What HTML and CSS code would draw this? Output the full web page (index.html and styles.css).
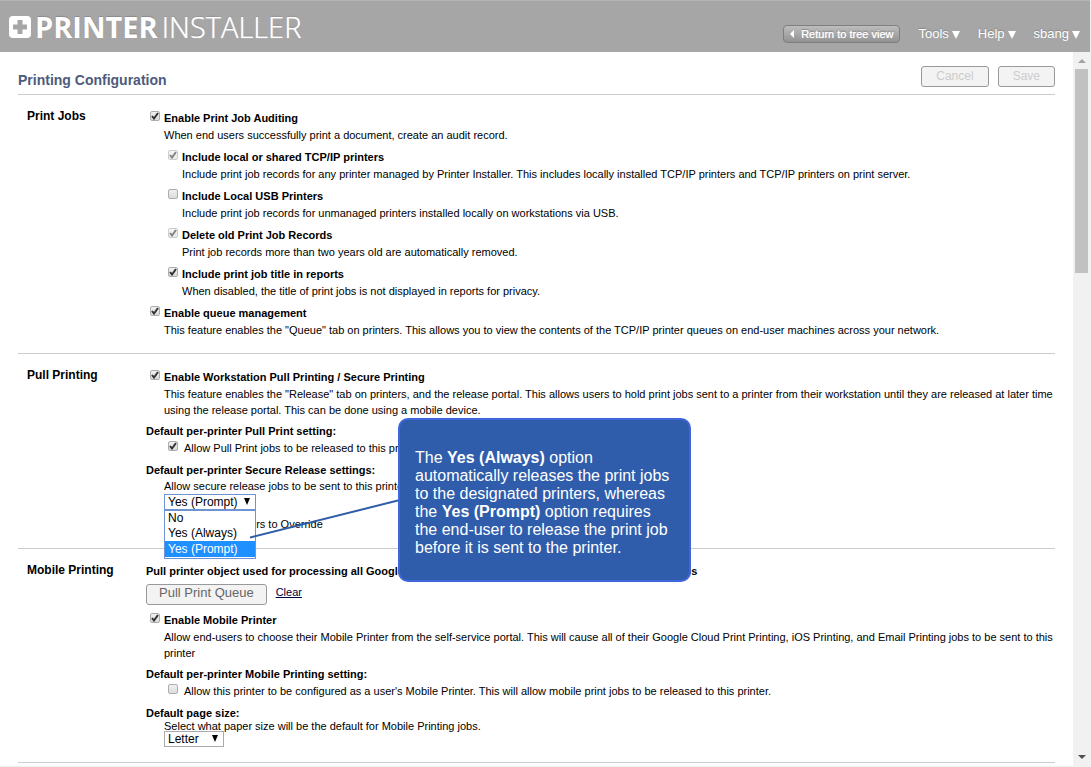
FILE: index.html
```html
<!DOCTYPE html>
<html lang="en">
<head>
<meta charset="utf-8">
<title>Printer Installer - Printing Configuration</title>
<link rel="stylesheet" href="styles.css">
</head>
<body>
<header class="topbar">
  <div class="logo">
    <svg class="logo-mark" viewBox="0 0 22 22" aria-hidden="true"><path fill="#fff" fill-rule="evenodd" d="M4 0h14a4 4 0 0 1 4 4v14a4 4 0 0 1-4 4H4a4 4 0 0 1-4-4V4a4 4 0 0 1 4-4zM8.500 4v4.500H4v5h4.500V18h5v-4.500H18v-5h-4.500V4z"/></svg>
    <span class="logo-bold">PRINTER</span><span class="logo-light">INSTALLER</span>
  </div>
  <nav class="topnav">
    <button class="tree-button" type="button"><svg class="back-arrow" viewBox="0 0 4 8" aria-hidden="true"><path fill="#fff" d="M4 0v8L0 4z"/></svg>Return to tree view</button>
    <button class="menu" type="button">Tools<svg class="menu-arrow" viewBox="0 0 8 10" aria-hidden="true"><path fill="#fff" d="M0 2h8L4 10z"/></svg></button>
    <button class="menu" type="button">Help<svg class="menu-arrow" viewBox="0 0 8 10" aria-hidden="true"><path fill="#fff" d="M0 2h8L4 10z"/></svg></button>
    <button class="menu" type="button">sbang<svg class="menu-arrow" viewBox="0 0 8 10" aria-hidden="true"><path fill="#fff" d="M0 2h8L4 10z"/></svg></button>
  </nav>
</header>
<div class="workspace">
  <main class="content">
    <div class="titlebar">
      <h1>Printing Configuration</h1>
      <div class="actions">
        <button class="btn" type="button" disabled>Cancel</button>
        <button class="btn" type="button" disabled>Save</button>
      </div>
    </div>

    <section class="section">
      <h2>Print Jobs</h2>
      <div class="fields">
        <div class="option">
          <input type="checkbox" id="audit" checked>
          <div><label for="audit">Enable Print Job Auditing</label><p>When end users successfully print a document, create an audit record.</p></div>
        </div>
        <div class="option sub">
          <input type="checkbox" id="shared" checked disabled>
          <div><label for="shared">Include local or shared TCP/IP printers</label><p>Include print job records for any printer managed by Printer Installer. This includes locally installed TCP/IP printers and TCP/IP printers on print server.</p></div>
        </div>
        <div class="option sub">
          <input type="checkbox" id="usb">
          <div><label for="usb">Include Local USB Printers</label><p>Include print job records for unmanaged printers installed locally on workstations via USB.</p></div>
        </div>
        <div class="option sub">
          <input type="checkbox" id="old" checked disabled>
          <div><label for="old">Delete old Print Job Records</label><p>Print job records more than two years old are automatically removed.</p></div>
        </div>
        <div class="option sub">
          <input type="checkbox" id="jobtitle" checked>
          <div><label for="jobtitle">Include print job title in reports</label><p>When disabled, the title of print jobs is not displayed in reports for privacy.</p></div>
        </div>
        <div class="option">
          <input type="checkbox" id="queue" checked>
          <div><label for="queue">Enable queue management</label><p>This feature enables the "Queue" tab on printers. This allows you to view the contents of the TCP/IP printer queues on end-user machines across your network.</p></div>
        </div>
      </div>
    </section>

    <section class="section">
      <h2>Pull Printing</h2>
      <div class="fields">
        <div class="option">
          <input type="checkbox" id="pull" checked>
          <div><label for="pull">Enable Workstation Pull Printing / Secure Printing</label><p>This feature enables the "Release" tab on printers, and the release portal. This allows users to hold print jobs sent to a printer from their workstation until they are released at later time using the release portal. This can be done using a mobile device.</p></div>
        </div>
        <div>
          <h3>Default per-printer Pull Print setting:</h3>
          <div class="option sub plain">
            <input type="checkbox" id="allowpull" checked>
            <label for="allowpull">Allow Pull Print jobs to be released to this printer.</label>
          </div>
        </div>
        <div>
          <h3>Default per-printer Secure Release settings:</h3>
          <div class="indent">
            <label class="hint" for="secure">Allow secure release jobs to be sent to this printer.</label>
            <div class="picker picker-open">
              <select id="secure"><option>No</option><option>Yes (Always)</option><option selected>Yes (Prompt)</option></select>
              <svg class="picker-arrow" viewBox="0 0 6 7" aria-hidden="true"><path d="M0 0h6L3 7z"/></svg>
              <ul class="choices">
                <li>No</li>
                <li>Yes (Always)</li>
                <li class="chosen">Yes (Prompt)</li>
              </ul>
              <svg class="pointer" viewBox="0 0 150 40" aria-hidden="true"><path d="M0 38.500L150 1" stroke="#2f5dab" stroke-width="2" fill="none"/></svg>
              <div class="callout">The <b>Yes (Always)</b> option automatically releases the print jobs to the designated printers, whereas the <b>Yes (Prompt)</b> option requires the end-user to release the print job before it is sent to the printer.</div>
            </div>
          </div>
        </div>
        <div class="option sub plain">
          <input type="checkbox" id="override">
          <label for="override">Allow End-Users to Override</label>
        </div>
      </div>
    </section>

    <section class="section">
      <h2>Mobile Printing</h2>
      <div class="fields">
        <div>
          <h3>Pull printer object used for processing all Google Cloud Print Printing, iOS Printing, &amp; Email Printing jobs</h3>
          <div class="queue-row">
            <button class="btn btn-dark" type="button">Pull Print Queue</button>
            <a href="#">Clear</a>
          </div>
        </div>
        <div class="option">
          <input type="checkbox" id="mobile" checked>
          <div><label for="mobile">Enable Mobile Printer</label><p>Allow end-users to choose their Mobile Printer from the self-service portal. This will cause all of their Google Cloud Print Printing, iOS Printing, and Email Printing jobs to be sent to this printer</p></div>
        </div>
        <div>
          <h3>Default per-printer Mobile Printing setting:</h3>
          <div class="option sub plain">
            <input type="checkbox" id="usermobile">
            <label for="usermobile">Allow this printer to be configured as a user's Mobile Printer. This will allow mobile print jobs to be released to this printer.</label>
          </div>
        </div>
        <div>
          <h3>Default page size:</h3>
          <div class="indent">
            <label class="hint hint-tight" for="paper">Select what paper size will be the default for Mobile Printing jobs.</label>
            <div class="picker picker-small">
              <select id="paper"><option>Letter</option><option>A4</option></select>
              <svg class="picker-arrow" viewBox="0 0 6 7" aria-hidden="true"><path d="M0 0h6L3 7z"/></svg>
            </div>
          </div>
        </div>
      </div>
    </section>
  </main>
  <div class="scrollbar" aria-hidden="true">
    <svg class="scroll-arrow" viewBox="0 0 8 4"><path fill="#a3a3a3" d="M0 4l4-4 4 4z"/></svg>
    <div class="track"><div class="thumb"></div></div>
    <svg class="scroll-arrow" viewBox="0 0 8 4"><path fill="#505050" d="M0 0l4 4 4-4z"/></svg>
  </div>
</div>
</body>
</html>
```
FILE: styles.css
```css
* { box-sizing: border-box; }
html, body { margin: 0; }
body {
  display: flex;
  flex-direction: column;
  min-height: 100vh;
  padding: 0 1px 1px 0;
  background: #f1f1f1;
  color: #000;
  font: 11px/16px "Liberation Sans", Arial, sans-serif;
}
h1, h2, h3, p, ul { margin: 0; padding: 0; }
button, select { font-family: inherit; }

.topbar {
  display: flex;
  justify-content: space-between;
  height: 52px;
  padding: 0 10px 0 9px;
  background: #a6a6a6;
  border-top: 1px solid #b4b4b4;
  color: #fff;
}
.logo {
  display: flex;
  align-items: center;
  font-family: "Open Sans", "Noto Sans", sans-serif;
  text-shadow: 0 -1px 1px #8a8a8a;
  white-space: nowrap;
}
.logo-mark { width: 22px; height: 22px; margin-right: 4px; }
.logo-bold { font-size: 29px; font-weight: 700; margin-right: 4px; }
.logo-light { font-size: 29px; font-weight: 300; text-shadow: 0 0 1px #fff, 0 -1px 1px #8a8a8a; }
.topnav { display: flex; align-items: center; gap: 18px; padding-top: 14px; }
.tree-button {
  display: flex;
  align-items: center;
  gap: 7px;
  height: 18px;
  padding: 0 6px;
  border: 1px solid #7f7f7f;
  border-radius: 4px;
  background: linear-gradient(#bdbdbd, #929292);
  color: #fff;
  font-size: 11px;
  font-weight: 400;
  text-shadow: 0 0 1px #fff, 0 -1px 1px #777;
}
.back-arrow { width: 4px; height: 8px; }
.menu {
  display: flex;
  align-items: center;
  gap: 3px;
  padding: 0;
  border: 0;
  background: none;
  color: #fff;
  font-size: 13px;
  text-shadow: 0 -1px 1px #888;
}
.menu-arrow { width: 8px; height: 10px; }

.workspace { display: flex; flex: 1; background: #fff; }
.content { flex: 1; min-width: 0; padding: 0 18px; }
.titlebar {
  display: flex;
  justify-content: space-between;
  align-items: center;
  height: 43px;
  padding-top: 7px;
  border-bottom: 1px solid #ccc;
}
h1 { font-size: 14px; color: #4d5b7c; padding-top: 6px; }
.actions { display: flex; gap: 9px; }
.btn {
  height: 21px;
  padding: 0 14px 2px;
  border: 1px solid #999;
  border-radius: 3px;
  background: #f3f3f3;
  color: #ccc;
  font-size: 12px;
  line-height: 16px;
}
.btn-dark { padding: 0 12px 3px; color: #666; font-size: 13px; }

.section {
  display: grid;
  grid-template-columns: 119px 1fr;
  padding: 14px 0 15px 9px;
  border-bottom: 1px solid #ccc;
}
h2 { font-size: 12px; line-height: 14px; }
h3 { font-size: 11px; line-height: 16px; }
.fields { display: flex; flex-direction: column; gap: 5px; min-width: 0; }
.option { display: flex; align-items: flex-start; gap: 4px; padding-left: 4px; }
.option label { display: block; font-weight: 700; line-height: 18px; }
.sub { padding-left: 22px; }
.option.plain { gap: 6px; }
.option.plain label { font-weight: 400; }

input[type="checkbox"] {
  appearance: none;
  flex: none;
  width: 10px;
  height: 10px;
  margin: 2px 0 0;
  border: 1px solid #adadad;
  border-radius: 2px;
  background: linear-gradient(#f0f0f0, #dcdcdc);
}
input[type="checkbox"]:checked {
  background: url("data:image/svg+xml,%3Csvg xmlns='http://www.w3.org/2000/svg' viewBox='0 0 8 8'%3E%3Cpath d='M1 4l2 2.500L7 1' fill='none' stroke='%23333' stroke-width='2'/%3E%3C/svg%3E") center / 8px 8px no-repeat, linear-gradient(#f0f0f0, #dcdcdc);
}
input[type="checkbox"]:disabled { opacity: 0.6; }

.indent { padding-left: 18px; }
.hint { display: block; }
.hint-tight { line-height: 10px; }
.picker { position: relative; width: 92px; height: 16px; }
.picker-small { width: 60px; }
.picker select {
  display: block;
  appearance: none;
  width: 100%;
  height: 100%;
  padding: 0 3px;
  border: 1px solid #aaa;
  border-radius: 0;
  background: #fff;
  color: #000;
  font-size: 12px;
  line-height: 13px;
}
.picker-open select { border-color: #6f93d2; }
.picker-arrow { position: absolute; top: 4px; right: 6px; width: 6px; height: 7px; pointer-events: none; }
.choices {
  position: absolute;
  top: 16px;
  left: 0;
  width: 100%;
  padding-bottom: 1px;
  border: 1px solid #6f93d2;
  background: #fff;
  list-style: none;
  font-size: 12px;
  z-index: 1;
}
.choices li { padding-left: 3px; line-height: 15px; }
.choices .chosen { background: #1e90ff; color: #fff; line-height: 16px; }
.pointer { position: absolute; top: 5px; left: 86px; width: 150px; height: 40px; z-index: 2; }
.callout {
  position: absolute;
  top: -76px;
  left: 234px;
  width: 293px;
  padding: 29px 14px 23px 15px;
  border: 2px solid #3f66dc;
  border-radius: 10px;
  background: #2f5dab;
  color: #fff;
  font-size: 16px;
  line-height: 18px;
  z-index: 3;
}

.queue-row { display: flex; align-items: flex-start; gap: 9px; padding: 5px 0 1px; }
.queue-row a { color: #000040; }

.scrollbar {
  display: flex;
  flex-direction: column;
  align-items: center;
  width: 17px;
  padding: 7px 0;
  background: #f1f1f1;
}
.scroll-arrow { flex: none; width: 8px; height: 4px; }
.track { flex: 1; width: 13px; margin: 6px 0; }
.thumb { height: 30%; background: #c1c1c1; }
```
